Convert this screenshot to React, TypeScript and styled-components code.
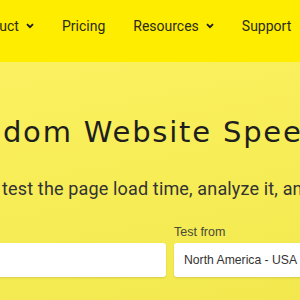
import styled, { createGlobalStyle } from "styled-components";

const GlobalStyle = createGlobalStyle`
  html, body {
    margin: 0;
    padding: 0;
    width: 300px;
    height: 300px;
    overflow: hidden;
    background: #f8ee58;
  }
  * {
    box-sizing: border-box;
  }
`;

const Page = styled.div`
  width: 300px;
  height: 300px;
  overflow: hidden;
  background: linear-gradient(170deg, #fdf264 0%, #f7ed57 55%, #f2e84e 100%);
`;

const Header = styled.header`
  height: 62px;
  background: #ffed00;
  display: flex;
  align-items: center;
  padding-bottom: 10px;
  overflow: hidden;
`;

const Nav = styled.nav`
  display: flex;
  align-items: center;
  gap: 28px;
  margin-left: -30px;
  white-space: nowrap;
`;

const NavItem = styled.span`
  display: flex;
  align-items: center;
  gap: 7px;
  font-family: Roboto, "Liberation Sans", sans-serif;
  font-size: 14px;
  color: #2b2b1a;
`;

const Hero = styled.section`
  padding-top: 52px;
  white-space: nowrap;
`;

const Title = styled.h1`
  margin: 0 0 0 -66px;
  font-family: "DejaVu Sans", Lato, sans-serif;
  font-weight: 400;
  font-size: 29px;
  letter-spacing: 1.8px;
  color: #1e1e1e;
  line-height: 36px;
`;

const Subtitle = styled.p`
  margin: 28px 0 0 -118px;
  font-family: Roboto, "Liberation Sans", sans-serif;
  font-size: 18px;
  letter-spacing: 0.15px;
  color: #333;
  line-height: 22px;
`;

const Form = styled.div`
  display: flex;
  gap: 8px;
  margin: 25px 0 0 -120px;
`;

const Field = styled.div<{ w: number }>`
  display: flex;
  flex-direction: column;
  flex: 0 0 ${(p) => p.w}px;
`;

const Label = styled.label`
  font-family: "Liberation Sans", Arial, sans-serif;
  font-size: 12.5px;
  color: #4a4a3a;
  height: 18px;
  line-height: 14px;
`;

const Box = styled.div`
  height: 34px;
  background: #fff;
  border-radius: 3px;
  box-shadow: 0 1px 2px rgba(0, 0, 0, 0.12);
  display: flex;
  align-items: center;
  padding-left: 10px;
  font-family: "Liberation Sans", Arial, sans-serif;
  font-size: 12.2px;
  color: #333;
`;

const Chevron = () => (
  <svg width="8" height="6" viewBox="0 0 8 6">
    <path d="M1 1.2 L4 4.2 L7 1.2" fill="none" stroke="#1a1a1a" strokeWidth="1.8" />
  </svg>
);

export default function App() {
  return (
    <Page>
      <GlobalStyle />
      <Header>
        <Nav>
          <NavItem>
            Product <Chevron />
          </NavItem>
          <NavItem>Pricing</NavItem>
          <NavItem>
            Resources <Chevron />
          </NavItem>
          <NavItem>Support</NavItem>
        </Nav>
      </Header>
      <Hero>
        <Title>Pingdom Website Speed Test</Title>
        <Subtitle>Enter a URL to test the page load time, analyze it, and find bottlenecks.</Subtitle>
        <Form>
          <Field w={286}>
            <Label>URL</Label>
            <Box />
          </Field>
          <Field w={200}>
            <Label>Test from</Label>
            <Box>North America - USA - Washington D.C</Box>
          </Field>
        </Form>
      </Hero>
    </Page>
  );
}
